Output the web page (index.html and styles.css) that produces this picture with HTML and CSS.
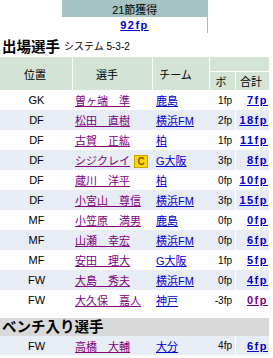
FILE: index.html
```html
<!DOCTYPE html>
<html lang="ja">
<head>
<meta charset="utf-8">
<title>出場選手</title>
<link rel="stylesheet" href="styles.css">
</head>
<body>
<div class="page">
  <table class="round">
    <tr><th>21節獲得</th></tr>
    <tr><td><a href="#" class="total">92fp</a></td></tr>
  </table>

  <h2 class="section"><span class="title">出場選手</span><span class="sys">システム 5-3-2</span></h2>

  <table class="players">
    <colgroup>
      <col class="c-pos"><col class="c-name"><col class="c-team"><col class="c-bonus"><col class="c-sum">
    </colgroup>
    <thead>
      <tr><th rowspan="2" class="h-pos">位置</th><th rowspan="2" class="h-wide">選手</th><th rowspan="2" class="h-wide">チーム</th><th colspan="2" class="blank"></th></tr>
      <tr><th class="sub">ボ</th><th class="sub last">合計</th></tr>
    </thead>
    <tbody>
      <tr><td class="pos">GK</td><td class="name"><a href="#">曽ヶ端　準</a></td><td class="team"><a href="#">鹿島</a></td><td class="bonus">1fp</td><td class="sum"><a href="#" class="total">7fp</a></td></tr>
      <tr class="alt"><td class="pos">DF</td><td class="name"><a href="#">松田　直樹</a></td><td class="team"><a href="#">横浜FM</a></td><td class="bonus">2fp</td><td class="sum"><a href="#" class="total">18fp</a></td></tr>
      <tr><td class="pos">DF</td><td class="name"><a href="#">古賀　正紘</a></td><td class="team"><a href="#">柏</a></td><td class="bonus">1fp</td><td class="sum"><a href="#" class="total">11fp</a></td></tr>
      <tr class="alt"><td class="pos">DF</td><td class="name"><a href="#">シジクレイ</a><span class="cap">C</span></td><td class="team"><a href="#">G大阪</a></td><td class="bonus">3fp</td><td class="sum"><a href="#" class="total">8fp</a></td></tr>
      <tr><td class="pos">DF</td><td class="name"><a href="#">蔵川　洋平</a></td><td class="team"><a href="#">柏</a></td><td class="bonus">0fp</td><td class="sum"><a href="#" class="total">10fp</a></td></tr>
      <tr class="alt"><td class="pos">DF</td><td class="name"><a href="#">小宮山　尊信</a></td><td class="team"><a href="#">横浜FM</a></td><td class="bonus">3fp</td><td class="sum"><a href="#" class="total">15fp</a></td></tr>
      <tr><td class="pos">MF</td><td class="name"><a href="#">小笠原　満男</a></td><td class="team"><a href="#">鹿島</a></td><td class="bonus">0fp</td><td class="sum"><a href="#" class="total">0fp</a></td></tr>
      <tr class="alt"><td class="pos">MF</td><td class="name"><a href="#">山瀬　幸宏</a></td><td class="team"><a href="#">横浜FM</a></td><td class="bonus">0fp</td><td class="sum"><a href="#" class="total">6fp</a></td></tr>
      <tr><td class="pos">MF</td><td class="name"><a href="#">安田　理大</a></td><td class="team"><a href="#">G大阪</a></td><td class="bonus">1fp</td><td class="sum"><a href="#" class="total">5fp</a></td></tr>
      <tr class="alt"><td class="pos">FW</td><td class="name"><a href="#">大島　秀夫</a></td><td class="team"><a href="#">横浜FM</a></td><td class="bonus">0fp</td><td class="sum"><a href="#" class="total">4fp</a></td></tr>
      <tr><td class="pos">FW</td><td class="name"><a href="#">大久保　嘉人</a></td><td class="team"><a href="#">神戸</a></td><td class="bonus">-3fp</td><td class="sum"><a href="#" class="total visited">0fp</a></td></tr>
    </tbody>
  </table>

  <div class="bench-title">ベンチ入り選手</div>
  <table class="players bench">
    <colgroup>
      <col class="c-pos"><col class="c-name"><col class="c-team"><col class="c-bonus"><col class="c-sum">
    </colgroup>
    <tbody>
      <tr class="alt"><td class="pos">FW</td><td class="name"><a href="#">高橋　大輔</a></td><td class="team"><a href="#">大分</a></td><td class="bonus">4fp</td><td class="sum"><a href="#" class="total">6fp</a></td></tr>
    </tbody>
  </table>
</div>
</body>
</html>
```

FILE: styles.css
```css
html, body {
  margin: 0;
  padding: 0;
  background: #ffffff;
}

body {
  font-family: "Liberation Sans", "Noto Sans CJK JP", sans-serif;
  font-size: 11px;
  color: #000;
}

.page {
  width: 270px;
}

a {
  text-decoration: underline;
}

/* round summary */
.round {
  width: 146px;
  margin: 0 auto;
  border-collapse: collapse;
}

.round th {
  height: 17px;
  padding: 0;
  background: #a6c3c3;
  font-weight: normal;
  font-size: 11px;
  text-align: center;
}

.round td {
  height: 16px;
  padding: 0;
  text-align: center;
  border-right: 1px solid #b4b4b4;
}

.total {
  font-weight: bold;
  color: #0000cc;
  letter-spacing: 1.5px;
}

.total.visited {
  color: #800080;
}

/* heading */
.section {
  margin: 0;
  height: 24px;
  display: flex;
  align-items: center;
  gap: 4px;
  padding-left: 2px;
}

.section .title {
  font-size: 14.5px;
  font-weight: bold;
}

.section .sys {
  font-size: 10px;
  font-weight: normal;
}

/* players table */
.players {
  width: 269px;
  table-layout: fixed;
  border-collapse: separate;
  border-spacing: 0;
}

.c-pos { width: 73px; }
.c-name { width: 80px; }
.c-team { width: 57px; }
.c-bonus { width: 26px; }
.c-sum { width: 33px; }

.players th {
  padding: 0;
  background: #d3e3d5;
  font-weight: normal;
  font-size: 11px;
  text-align: center;
  border-right: 1px solid #fff;
}

.players th.h-pos {
  padding-right: 2px;
}

.players th.h-wide {
  padding-right: 11px;
}

.players th.blank {
  height: 14px;
  border-right: 0;
  border-bottom: 1px solid #fff;
}

.players th.sub {
  height: 18px;
  padding-right: 3px;
}

.players th.last {
  border-right: 0;
}

.players td {
  height: 20px;
  padding: 0;
  white-space: nowrap;
}

.players tr.alt td {
  background: #e8ecf4;
}

.players td.pos {
  text-align: center;
}

.players td.name {
  padding-left: 2px;
}

.players td.name a {
  color: #800080;
}

.players td.team {
  padding-left: 3px;
}

.players td.team a {
  color: #0000cc;
}

.players td.bonus {
  text-align: right;
  padding-right: 3px;
  font-size: 10px;
  border-right: 1px solid #fff;
}

.players td.sum {
  text-align: right;
  padding-right: 1px;
}

.cap {
  display: inline-block;
  margin-left: 4px;
  width: 12px;
  height: 11px;
  line-height: 11px;
  background: #ffd800;
  border: 1px solid #c9a400;
  color: #7a5a00;
  font-weight: bold;
  font-size: 10px;
  text-align: center;
  vertical-align: middle;
}

/* bench */
.bench-title {
  margin-top: 8px;
  width: 269px;
  height: 18px;
  line-height: 18px;
  background: #d9d9d9;
  font-size: 14.5px;
  font-weight: bold;
  padding-left: 2px;
  box-sizing: border-box;
}

.bench td {
  height: 19px;
}
```
